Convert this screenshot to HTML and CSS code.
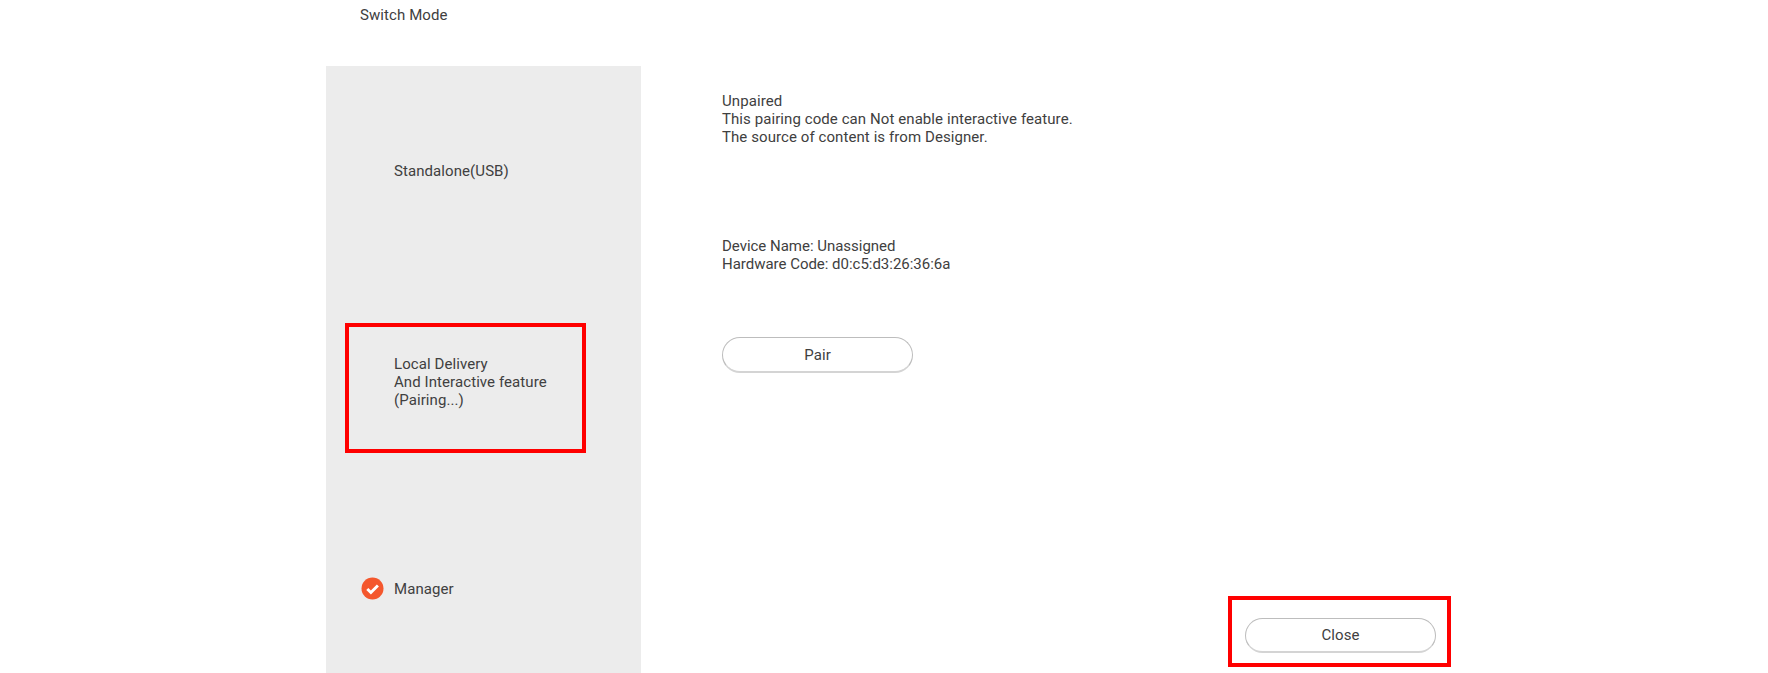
FILE: index.html
```html
<!DOCTYPE html>
<html lang="en">
<head>
<meta charset="utf-8">
<title>Switch Mode</title>
<link rel="stylesheet" href="styles.css">
</head>
<body>
<div class="page">
  <header class="title">Switch Mode</header>
  <div class="panel">
    <aside class="sidebar">
      <div class="mode mode-first">
        <span class="mode-icon"></span>
        <span class="mode-text">Standalone(USB)</span>
      </div>
      <div class="mode mode-middle">
        <span class="mode-icon"></span>
        <span class="mode-text">Local Delivery<br>And Interactive feature<br>(Pairing...)</span>
        <span class="mark mark-local"></span>
      </div>
      <div class="mode mode-last">
        <span class="mode-icon">
          <svg class="check" viewBox="0 0 23 23" width="23" height="23" aria-hidden="true">
            <circle cx="11.5" cy="11.5" r="11" fill="#f4572d"/>
            <path d="M6.3 12l3.6 3.5 7-7" fill="none" stroke="#fff" stroke-width="2.9"/>
          </svg>
        </span>
        <span class="mode-text">Manager</span>
      </div>
    </aside>
    <main class="content">
      <p class="block status">Unpaired<br>This pairing code can Not enable interactive feature.<br>The source of content is from Designer.</p>
      <p class="block device">Device Name: Unassigned<br>Hardware Code: d0:c5:d3:26:36:6a</p>
      <button class="pill pair" type="button">Pair</button>
      <div class="footer">
        <button class="pill close" type="button">Close</button>
        <span class="mark mark-close"></span>
      </div>
    </main>
  </div>
</div>
</body>
</html>
```
FILE: styles.css
```css
* { box-sizing: border-box; }
html, body { margin: 0; padding: 0; background: #fff; }
body {
  height: 673px;
  overflow: hidden;
  font-family: Roboto, "Liberation Sans", sans-serif;
  font-size: 15px;
  letter-spacing: 0.08px;
  line-height: 18px;
  color: #404040;
}
.page { width: 1115px; margin-left: 326px; }
.title { height: 66px; padding: 6px 0 0 34px; }
.panel { display: flex; height: 607px; }
.sidebar { width: 315px; flex: none; background: #ececec; display: flex; flex-direction: column; }
.mode { position: relative; display: flex; align-items: center; flex: none; }
.mode-first { height: 210px; }
.mode-middle { height: 210px; padding-top: 2px; }
.mode-last { height: 187px; padding-top: 18px; }
.mode-icon { width: 68px; padding-left: 35px; flex: none; display: flex; }
.check { display: block; }
.mark { position: absolute; border: 4px solid #f00; pointer-events: none; }
.mark-local { left: 19px; top: 47px; width: 241px; height: 130px; }
.content { flex: 1; padding: 26px 0 0 81px; display: flex; flex-direction: column; align-items: flex-start; }
.block { margin: 0; }
.status { height: 100px; margin-bottom: 45px; }
.device { height: 36px; margin-top: 0; letter-spacing: -0.02px; }
.pill {
  width: 191px;
  height: 36px;
  padding: 1px 0 0;
  background: #fff;
  border: 1px solid #bdbdbd;
  border-bottom: 2px solid #d4d4d4;
  border-radius: 18px;
  font: inherit;
  letter-spacing: inherit;
  color: inherit;
}
.pair { margin-top: 64px; }
.close { height: 35px; padding-top: 0; }
.footer { position: relative; margin-top: auto; margin-bottom: 20px; align-self: flex-end; margin-right: 5px; display: flex; }
.mark-close { left: -17px; top: -22px; width: 223px; height: 71px; }
```
